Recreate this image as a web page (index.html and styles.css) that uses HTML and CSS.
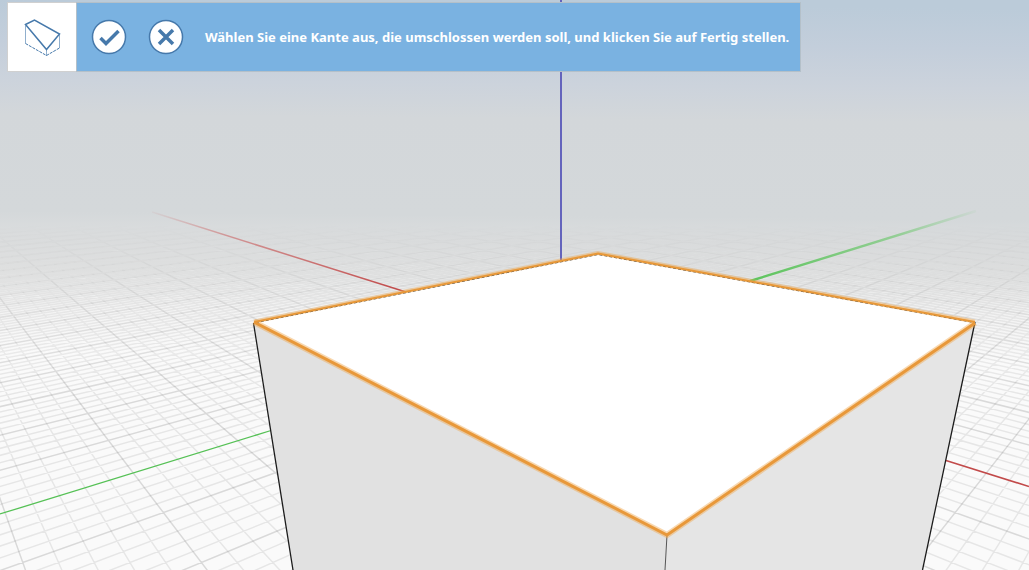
FILE: index.html
```html
<!DOCTYPE html>
<html lang="de">
<head>
<meta charset="utf-8">
<meta name="viewport" content="width=device-width, initial-scale=1">
<title>Kante umschließen</title>
<link rel="stylesheet" href="styles.css">
</head>
<body>
<main class="viewport">
  <svg class="scene" viewBox="0 0 1029 570" preserveAspectRatio="xMidYMin slice" aria-hidden="true">
    <defs>
      <linearGradient id="sky" gradientUnits="userSpaceOnUse" x1="5" y1="0" x2="0" y2="570">
        <stop offset="0" stop-color="#bbcbd9"/>
        <stop offset="0.07" stop-color="#c3cedb"/>
        <stop offset="0.14" stop-color="#ccd3dc"/>
        <stop offset="0.2" stop-color="#d3d7da"/>
        <stop offset="0.37" stop-color="#d4d8da"/>
        <stop offset="0.41" stop-color="#dbddde"/>
        <stop offset="0.47" stop-color="#e5e6e6"/>
        <stop offset="0.54" stop-color="#f3f3f3"/>
        <stop offset="0.62" stop-color="#fafafa"/>
        <stop offset="1" stop-color="#fafafa"/>
      </linearGradient>
      <linearGradient id="fade" gradientUnits="userSpaceOnUse" x1="0" y1="225" x2="0" y2="400">
        <stop offset="0" stop-color="#000"/>
        <stop offset="0.2" stop-color="#444"/>
        <stop offset="0.5" stop-color="#aaa"/>
        <stop offset="1" stop-color="#fff"/>
      </linearGradient>
      <mask id="fog" maskUnits="userSpaceOnUse" x="0" y="0" width="1029" height="570">
        <rect width="1029" height="570" fill="url(#fade)"/>
      </mask>
      <linearGradient id="red-far" gradientUnits="userSpaceOnUse" x1="152" y1="212" x2="405" y2="291">
        <stop offset="0" stop-color="#c85050" stop-opacity="0.05"/>
        <stop offset="0.3" stop-color="#c85050" stop-opacity="0.5"/>
        <stop offset="1" stop-color="#c04848"/>
      </linearGradient>
      <linearGradient id="green-far" gradientUnits="userSpaceOnUse" x1="976" y1="211" x2="750" y2="281">
        <stop offset="0" stop-color="#5cc45c" stop-opacity="0.05"/>
        <stop offset="0.35" stop-color="#5cc45c" stop-opacity="0.55"/>
        <stop offset="1" stop-color="#5cc45c"/>
      </linearGradient>
    </defs>
    <rect width="1029" height="570" fill="url(#sky)"/>
    <g mask="url(#fog)">
      <path id="grid-minor" class="grid grid-minor"/>
      <path id="grid-major" class="grid grid-major"/>
    </g>
    <path d="M152 212L406 292" stroke="url(#red-far)" stroke-width="1.5"/>
    <path d="M976 211L750 281" stroke="url(#green-far)" stroke-width="2.4"/>
    <path class="axis-green" d="M0 514L271 430.500"/>
    <path class="axis-red" d="M946 460.500L1029 486.500"/>
    <path class="axis-blue" d="M561 0V262"/>
    <path fill="#e1e1e1" d="M254 322L667 535L665 570H293Z"/>
    <path fill="#e5e5e5" d="M975 322L667 535L665 570H922Z"/>
    <path fill="#fff" d="M254 322L598 254L975 322L667 535Z"/>
    <path class="edge" d="M253.500 323L293 570M975 322L922.500 570"/>
    <path class="edge-front" d="M667 535L665 570"/>
    <g class="glow">
      <path stroke-width="4" d="M254 321.500L598 253L975 321.500"/>
      <path stroke-width="6" d="M254 322L667 535L975 323"/>
    </g>
    <path class="edge-back" d="M256 322.500L598 254.500L974 322.500"/>
    <path class="selected-back" d="M254 322L598 253.500L975 322"/>
    <path class="selected" d="M254 322L667 535L975 323"/>
  </svg>

  <header class="toolbar">
    <div class="tool">
      <svg class="tool-icon" viewBox="0 0 40 40" role="img" aria-label="Kante">
        <path class="wire-thin" d="M3.500 8.500V26.500M37.500 17.500V31M24.500 32.500V39"/>
        <path class="wire-dash" d="M3.500 26.500L24.500 38.500L37.500 31"/>
        <path class="wire" d="M3.500 7.500L12.500 3L37.500 17L24.500 32.500Z"/>
      </svg>
    </div>
    <div class="prompt">
      <button class="round" type="button" aria-label="Fertig stellen">
        <svg viewBox="0 0 36 36"><circle cx="18" cy="18" r="16.500"/><path d="M9.500 19L15 24.500L27.500 12"/></svg>
      </button>
      <button class="round" type="button" aria-label="Abbrechen">
        <svg viewBox="0 0 36 36"><circle cx="18" cy="18" r="16.500"/><path d="M11 11L25 25M25 11L11 25"/></svg>
      </button>
      <p class="message">Wählen Sie eine Kante aus, die umschlossen werden soll, und klicken Sie auf Fertig stellen.</p>
    </div>
  </header>
</main>
<script src="grid.js"></script>
</body>
</html>
```
FILE: styles.css
```css
* {
  box-sizing: border-box;
}

body {
  margin: 0;
  font-family: "Noto Sans", sans-serif;
}

.viewport {
  position: relative;
  min-height: 100vh;
  padding: 2px 7px;
  overflow: hidden;
  background: #fafafa;
}

.scene {
  position: absolute;
  inset: 0;
  width: 100%;
  height: 100%;
  fill: none;
}

.grid {
  stroke: #000;
  stroke-width: 1.5;
}

.grid-minor {
  stroke-opacity: 0.08;
}

.grid-major {
  stroke-opacity: 0.13;
}

.axis-green {
  stroke: #56c156;
  stroke-width: 1.3;
}

.axis-red {
  stroke: #c24a4a;
  stroke-width: 1.6;
}

.axis-blue {
  stroke: #6464bc;
  stroke-width: 2;
}

.edge {
  stroke: #1c1c1c;
  stroke-width: 1.3;
}

.edge-front {
  stroke: #555;
  stroke-width: 1;
}

.edge-back {
  stroke: #555;
  stroke-width: 1;
  stroke-dasharray: 3 2;
}

.glow {
  stroke: #f0a850;
  stroke-opacity: 0.45;
}

.selected-back {
  stroke: #e89838;
  stroke-width: 2;
}

.selected {
  stroke: #e8983a;
  stroke-width: 3;
}

.toolbar {
  position: relative;
  display: flex;
  width: fit-content;
  max-width: 100%;
}

.tool {
  display: flex;
  flex: none;
  align-items: center;
  justify-content: center;
  width: 69px;
  background: #fff;
  border: 1px solid #d0d0d0;
  border-right: 0;
}

.tool-icon {
  width: 40px;
  height: 40px;
  fill: none;
  stroke: #4679ab;
}

.wire {
  stroke-width: 1.5;
}

.wire-thin {
  stroke-width: 1;
  stroke-opacity: 0.6;
}

.wire-dash {
  stroke-width: 1;
  stroke-dasharray: 3 1;
}

.prompt {
  display: flex;
  align-items: center;
  gap: 21px;
  min-height: 70px;
  padding: 0 11px 0 14px;
  background: #7ab2e1;
  border: 1px solid #b4c0c9;
}

.round {
  flex: none;
  width: 36px;
  height: 36px;
  padding: 0;
  border: 0;
  border-radius: 50%;
  background: none;
  cursor: pointer;
}

.round svg {
  display: block;
  fill: none;
  stroke: #4679ab;
  stroke-width: 3.5;
}

.round circle {
  fill: #fff;
  stroke-width: 1.5;
}

.message {
  margin: 0;
  color: #fff;
  font-size: 13px;
  font-weight: bold;
  line-height: 16px;
}
```
FILE: grid.js
```js
// Ground plane: two families of parallel lines, each meeting at a vanishing point.
const HORIZON = 122;
const BASE = 570;
const STEP = 36.33;

function family(vanishX, axisX, direction, major) {
  const lines = [];
  for (let i = -100; i <= 150; i++) {
    if (i === 0 || (i % 5 === 0) !== major) continue;
    const x = axisX + direction * i * STEP;
    const endX = vanishX + (x - vanishX) * 2;
    lines.push(`M${vanishX} ${HORIZON}L${endX.toFixed(1)} ${BASE * 2 - HORIZON}`);
  }
  return lines.join("");
}

for (const [id, major] of [["grid-minor", false], ["grid-major", true]]) {
  const lines = family(1263, -180, -1, major) + family(-134, 1297, 1, major);
  document.getElementById(id).setAttribute("d", lines);
}
```
